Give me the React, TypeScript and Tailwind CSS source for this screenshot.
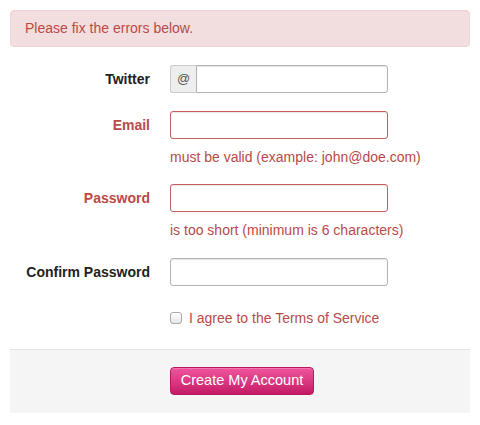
const labelCls = "w-[140px] shrink-0 pt-[5px] text-right text-[14px] leading-[18px] font-bold";
const inputCls = "h-[28px] w-[218px] rounded-[3px] border bg-white px-[6px] text-[14px] outline-none shadow-[inset_0_1px_1px_rgba(0,0,0,0.1)]";

const App = () => {
    return (
        <main className="min-h-[425px] bg-white pt-[10px] px-[10px] font-['Liberation_Sans',Arial,sans-serif] text-[#333]">
            <div className="w-[460px] rounded-[4px] border border-[#eed3d7] bg-[#f2dede] px-[14px] pt-[8px] pb-[9px] text-[14px] leading-[18px] text-[#b94a48]">
                Please fix the errors below.
            </div>
            <form className="mt-[18px] w-[460px]">
                <div className="flex gap-[20px] mb-[18px]">
                    <label className={labelCls + " text-[#222]"}>Twitter</label>
                    <div className="flex">
                        <span className="flex h-[28px] w-[26px] items-center justify-center rounded-l-[3px] border border-r-0 border-[#ccc] bg-[#eeeeee] text-[13px] text-[#555]">@</span>
                        <input className="h-[28px] w-[192px] rounded-r-[3px] border border-[#b3b3b3] bg-white px-[6px] text-[14px] outline-none shadow-[inset_0_1px_1px_rgba(0,0,0,0.1)]" />
                    </div>
                </div>
                <div className="flex gap-[20px] mb-[18px]">
                    <label className={labelCls + " text-[#b94a48]"}>Email</label>
                    <div>
                        <input className={inputCls + " border-[#c6605e]"} />
                        <p className="mt-[9px] text-[14px] leading-[18px] text-[#b94a48]">must be valid (example: john@doe.com)</p>
                    </div>
                </div>
                <div className="flex gap-[20px] mb-[19px]">
                    <label className={labelCls + " text-[#b94a48]"}>Password</label>
                    <div>
                        <input type="password" className={inputCls + " border-[#c6605e]"} />
                        <p className="mt-[9px] text-[14px] leading-[18px] text-[#b94a48]">is too short (minimum is 6 characters)</p>
                    </div>
                </div>
                <div className="flex gap-[20px] mb-[18px]">
                    <label className={labelCls + " text-[#222]"}>Confirm Password</label>
                    <input type="password" className={inputCls + " border-[#b3b3b3]"} />
                </div>
                <div className="flex gap-[20px] mb-[22px]">
                    <div className="w-[140px] shrink-0" />
                    <label className="flex items-center gap-[7px] pt-[5px] text-[14px] leading-[18px] text-[#b94a48]">
                        <span className="h-[12px] w-[12px] rounded-[3px] border border-[#aaa] bg-gradient-to-b from-white to-[#e6e6e6]" />
                        I agree to the Terms of Service
                    </label>
                </div>
                <div className="flex border-t border-[#e5e5e5] bg-[#f5f5f5] pt-[17px] pb-[18px] pl-[160px]">
                    <button type="button" className="h-[28px] w-[144px] rounded-[4px] border border-[#b8165f] bg-gradient-to-b from-[#f0549e] to-[#c41866] text-[14.5px] text-white shadow-[inset_0_1px_0_rgba(255,255,255,0.2)]">
                        Create My Account
                    </button>
                </div>
            </form>
        </main>
    );
};

export default App;
